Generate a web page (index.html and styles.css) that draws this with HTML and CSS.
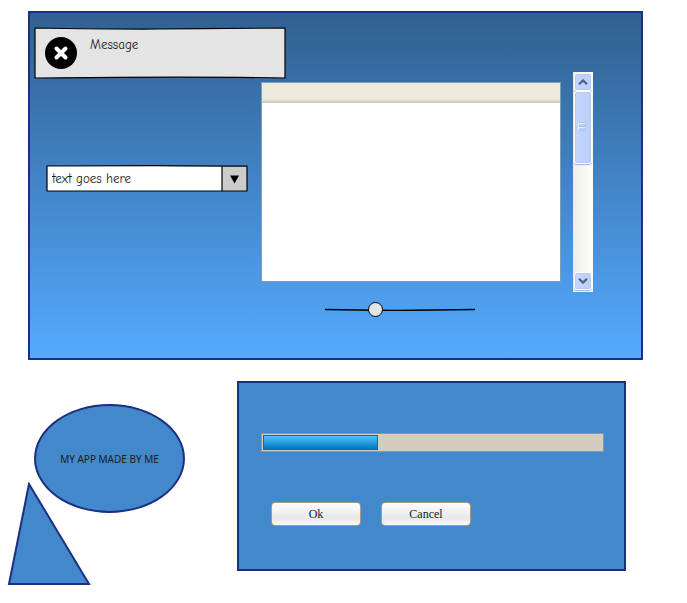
FILE: index.html
```html
<!DOCTYPE html>
<html lang="en">
<head>
<meta charset="utf-8">
<title>My app</title>
<link rel="stylesheet" href="styles.css">
</head>
<body>
<main class="window">
  <section class="message">
    <svg class="sketch" viewBox="0 0 252 52" preserveAspectRatio="none" aria-hidden="true">
      <path d="M1 1 C63 2 84 2.200 126 2 S220 1 251 1 L251 51 C200 50 130 50 84 50.300 S30 51 1 51 Z" fill="#e4e4e4" stroke="#000" stroke-width="1.200" stroke-linejoin="round"/>
    </svg>
    <svg class="message-icon" viewBox="0 0 32 32" aria-hidden="true">
      <circle cx="16" cy="16" r="16" fill="#000"/>
      <path d="M11.500 11.500 L20.500 20.500 M20.500 11.500 L11.500 20.500" stroke="#fff" stroke-width="4" stroke-linecap="round"/>
    </svg>
    <p class="message-text">Message</p>
  </section>

  <div class="combo">
    <select class="combo-select" aria-label="Text choice">
      <option>text goes here</option>
    </select>
    <svg class="sketch" viewBox="0 0 202 27" preserveAspectRatio="none" aria-hidden="true">
      <path d="M176 1 L201 1 L201 26 L176 26 Z" fill="#ccc"/>
      <path d="M1 1 C50 .6 90 .6 132 .8 S180 1 201 1.200 L201 26 L1 26 Z M176 1 L176 26" fill="none" stroke="#000" stroke-width="1.200" stroke-linejoin="round"/>
      <path d="M184 10.500 L193 10.500 L188.500 18.500 Z" fill="#000"/>
    </svg>
  </div>

  <section class="list" aria-label="List">
    <div class="list-header"></div>
  </section>

  <div class="slider">
    <svg class="sketch" viewBox="0 0 152 16" preserveAspectRatio="none" aria-hidden="true">
      <path d="M1 7.500 C40 8.500 100 8.500 151 7.500" fill="none" stroke="#000" stroke-width="1.300"/>
    </svg>
    <input class="slider-input" type="range" min="0" max="100" value="32" aria-label="Value">
  </div>

  <div class="scroll">
    <button class="scroll-button" type="button" aria-label="Scroll up">
      <svg viewBox="0 0 10 6"><path d="M1 5.200 L5 1.400 L9 5.200" fill="none" stroke="#4d6185" stroke-width="2.200"/></svg>
    </button>
    <div class="scroll-thumb"><span class="scroll-grip"></span></div>
    <button class="scroll-button scroll-down" type="button" aria-label="Scroll down">
      <svg viewBox="0 0 10 6"><path d="M1 .8 L5 4.600 L9 .8" fill="none" stroke="#4d6185" stroke-width="2.200"/></svg>
    </button>
  </div>
</main>

<div class="lower">
  <div class="shapes">
    <div class="oval">MY APP MADE BY ME</div>
    <svg class="triangle" viewBox="0 0 84 104" aria-hidden="true">
      <path d="M22 2 L82 102 L2 102 Z" fill="#4488cc" stroke="#1a3080" stroke-width="2"/>
    </svg>
  </div>
  <section class="dialog">
    <progress class="progress" max="100" value="34" aria-label="Progress"></progress>
    <div class="actions">
      <button class="action" type="button">Ok</button>
      <button class="action" type="button">Cancel</button>
    </div>
  </section>
</div>
</body>
</html>
```
FILE: styles.css
```css
* {
  box-sizing: border-box;
}

body {
  margin: 0;
  padding: 11px 0 16px;
  background: #fff;
  color: #1a1a1a;
  font-family: "Comic Sans MS", "Comic Neue", "Open Sans", sans-serif;
  font-size: 13px;
}

button,
select,
input,
progress {
  margin: 0;
  font: inherit;
}

.sketch {
  position: absolute;
  inset: 0;
  width: 100%;
  height: 100%;
  pointer-events: none;
}

.window {
  display: grid;
  grid-template-columns: 227px minmax(0, 1fr) 20px;
  grid-template-rows: 45px 10px 200px 10px 66px;
  margin: 0 44px 0 28px;
  padding: 14px 48px 0 4px;
  border: 2px solid #1a3080;
  background: linear-gradient(#306090, #55aaff);
}

.message {
  position: relative;
  display: flex;
  gap: 13px;
  grid-column: 1 / 3;
  grid-row: 1 / 3;
  align-self: start;
  width: 252px;
  height: 52px;
  padding: 10px 11px;
}

.message-icon {
  position: relative;
  width: 32px;
  height: 32px;
}

.message-text {
  position: relative;
  margin: 0;
  line-height: 16px;
}

.combo {
  position: relative;
  grid-column: 1;
  grid-row: 3;
  width: 202px;
  height: 27px;
  margin: 83px 0 0 12px;
  padding: 1px;
}

.combo-select {
  display: block;
  width: 100%;
  height: 100%;
  padding: 0 30px 0 5px;
  border: 0;
  border-radius: 0;
  background: #fff;
  color: #1a1a1a;
  appearance: none;
}

.list {
  grid-column: 2;
  grid-row: 3;
  margin-right: 12px;
  border: 1px solid #7f9db9;
  background: #fff;
}

.list-header {
  height: 20px;
  background: linear-gradient(#ebeadb 80%, #cbc7b8);
}

.slider {
  position: relative;
  grid-column: 2;
  grid-row: 4 / 6;
  justify-self: center;
  width: 152px;
  height: 16px;
  margin: 20px 34px 0 0;
}

.slider-input {
  position: relative;
  display: block;
  width: 100%;
  height: 15px;
  background: none;
  appearance: none;
}

.slider-input::-webkit-slider-thumb {
  width: 15px;
  height: 15px;
  border: 1px solid #000;
  border-radius: 50%;
  background: #e4e4e4;
  appearance: none;
}

.scroll {
  display: flex;
  flex-direction: column;
  grid-column: 3;
  grid-row: 2 / 5;
  padding: 1px 1px 2px;
  background: linear-gradient(90deg, #eeede5, #fefefb);
}

.scroll-button,
.scroll-thumb {
  display: flex;
  flex: none;
  align-items: center;
  justify-content: center;
  border: 1px solid #fff;
  border-radius: 3px;
  background: linear-gradient(90deg, #c8d6fb, #b9cffb);
  box-shadow: inset 0 0 0 1px #b9caf3, 0 1px 1px #9eb5dd;
}

.scroll-button {
  height: 18px;
  padding: 0;
}

.scroll-button svg {
  width: 10px;
  height: 6px;
}

.scroll-thumb {
  height: 73px;
  padding: 0 2px 2px 0;
}

.scroll-grip {
  width: 8px;
  height: 9px;
  border: 1px solid #a9c5fa;
  border-left-color: #e3ecfe;
  background: repeating-linear-gradient(#e3ecfe 0 1px, #b9cffb 1px 3px, #a0bff9 3px 4px);
}

.scroll-down {
  margin-top: auto;
}

.lower {
  display: flex;
  align-items: flex-start;
  margin: 21px 61px 0 8px;
}

.shapes {
  display: flex;
  flex: none;
  flex-direction: column;
  width: 229px;
  padding-top: 23px;
}

.oval {
  display: flex;
  align-items: center;
  justify-content: center;
  width: 151px;
  height: 109px;
  margin-left: 26px;
  border: 2px solid #1a3080;
  border-radius: 50%;
  background: #4488cc;
  font-family: "Noto Sans", sans-serif;
  font-size: 10px;
}

.triangle {
  width: 84px;
  height: 104px;
  margin: -31px 0 0 -1px;
}

.dialog {
  flex: 1;
  min-width: 0;
  height: 190px;
  padding: 50px 20px 0 22px;
  border: 2px solid #1a3080;
  background: #4488cc;
}

.progress {
  display: block;
  width: 100%;
  height: 19px;
  padding: 1px;
  border: 1px solid #a19383;
  background: #d5ccc0;
  appearance: none;
}

.progress::-webkit-progress-bar {
  background: #d5ccc0;
}

.progress::-webkit-progress-value {
  border: 1px solid #0a5cff;
  background: linear-gradient(#4fc0ff, #0079bf);
}

.actions {
  display: flex;
  gap: 20px;
  margin: 50px 0 0 10px;
}

.action {
  width: 90px;
  height: 24px;
  padding: 0;
  border: 1px solid #aa9988;
  border-radius: 4px;
  background: linear-gradient(#fff, #e8e8e8 70%, #fafafa);
  color: #1a1a1a;
  font-family: "Liberation Serif", serif;
  font-size: 12px;
}
```
